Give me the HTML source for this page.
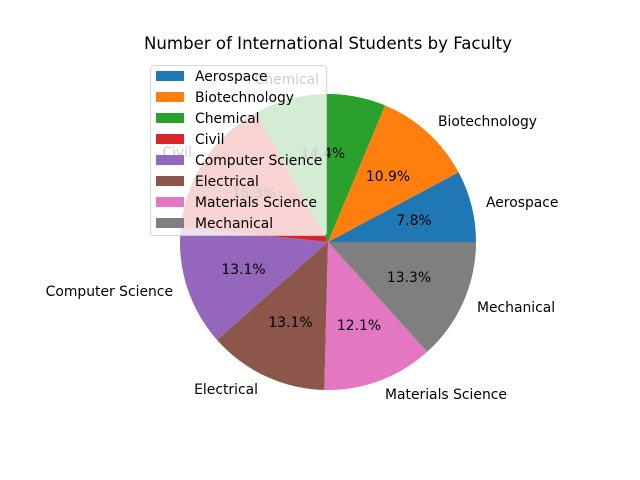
<!DOCTYPE html>
<html><head><meta charset="utf-8"><style>
html,body{margin:0;padding:0;background:#fff;}
svg{display:block;font-family:"DejaVu Sans","Liberation Sans",sans-serif;}
</style></head><body>
<svg width="640" height="480" viewBox="0 0 640 480" xmlns="http://www.w3.org/2000/svg">
<rect width="640" height="480" fill="#fff"/>
<text x="328" y="49" font-size="16.6" text-anchor="middle" fill="#000">Number of International Students by Faculty</text>
<g>
<path d="M328,242 L476,242 A148,148 0 0 0 458.6,172.3 Z" fill="#1f77b4"/>
<path d="M328,242 L458.6,172.3 A148,148 0 0 0 385.1,105.4 Z" fill="#ff7f0e"/>
<path d="M328,242 L385.1,105.4 A148,148 0 0 0 255.9,112.8 Z" fill="#2ca02c"/>
<path d="M328,242 L255.9,112.8 A148,148 0 0 0 180.7,227.1 Z" fill="#d62728"/>
<path d="M328,242 L180.7,227.1 A148,148 0 0 0 217.0,339.9 Z" fill="#9467bd"/>
<path d="M328,242 L217.0,339.9 A148,148 0 0 0 324.3,390.0 Z" fill="#8c564b"/>
<path d="M328,242 L324.3,390.0 A148,148 0 0 0 427.2,351.8 Z" fill="#e377c2"/>
<path d="M328,242 L427.2,351.8 A148,148 0 0 0 476,242 Z" fill="#7f7f7f"/>
</g>
<g font-size="13.9" fill="#000">
<text x="414" y="225" text-anchor="middle">7.8%</text>
<text x="388" y="181" text-anchor="middle">10.9%</text>
<text x="323" y="158" text-anchor="middle">14.4%</text>
<text x="254" y="198" text-anchor="middle">15.3%</text>
<text x="243.5" y="274" text-anchor="middle">13.1%</text>
<text x="290.5" y="327" text-anchor="middle">13.1%</text>
<text x="359" y="330" text-anchor="middle">12.1%</text>
<text x="409" y="282" text-anchor="middle">13.3%</text>
<text x="486" y="207">Aerospace</text>
<text x="438" y="126">Biotechnology</text>
<text x="319" y="84" text-anchor="end">Chemical</text>
<text x="192" y="157" text-anchor="end">Civil</text>
<text x="173" y="296" text-anchor="end">Computer Science</text>
<text x="258" y="394" text-anchor="end">Electrical</text>
<text x="385" y="399">Materials Science</text>
<text x="477" y="312">Mechanical</text>
</g>
<rect x="150.5" y="65.5" width="176" height="170" rx="3" fill="#fff" fill-opacity="0.8" stroke="#cccccc" stroke-opacity="0.8"/>
<g>
<rect x="156" y="71" width="28" height="10" fill="#1f77b4"/>
<rect x="156" y="92" width="28" height="10" fill="#ff7f0e"/>
<rect x="156" y="113" width="28" height="10" fill="#2ca02c"/>
<rect x="156" y="134" width="28" height="10" fill="#d62728"/>
<rect x="156" y="155" width="28" height="10" fill="#9467bd"/>
<rect x="156" y="176" width="28" height="10" fill="#8c564b"/>
<rect x="156" y="197" width="28" height="10" fill="#e377c2"/>
<rect x="156" y="218" width="28" height="10" fill="#7f7f7f"/>
</g>
<g font-size="13.9" fill="#000">
<text x="195" y="81">Aerospace</text>
<text x="195" y="102">Biotechnology</text>
<text x="195" y="123">Chemical</text>
<text x="195" y="144">Civil</text>
<text x="195" y="165">Computer Science</text>
<text x="195" y="186">Electrical</text>
<text x="195" y="207">Materials Science</text>
<text x="195" y="228">Mechanical</text>
</g>
</svg>
</body></html>
